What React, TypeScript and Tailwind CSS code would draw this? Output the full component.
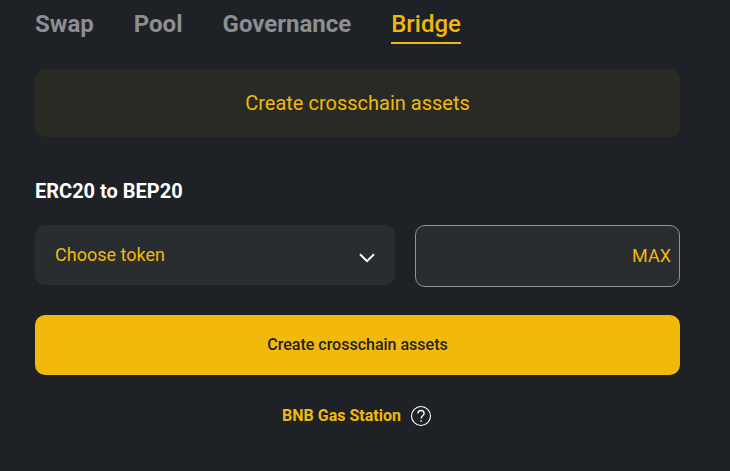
import { useState } from "react";

const TABS = [
  { label: "Swap", href: "#swap" },
  { label: "Pool", href: "#pool" },
  { label: "Governance", href: "#governance" },
  { label: "Bridge", href: "#bridge" },
];

function Tabs({ active }: { active: string }) {
  return (
    <nav className="flex gap-10 pt-1.5 text-2xl leading-9">
      {TABS.map((tab) => (
        <a
          key={tab.label}
          href={tab.href}
          aria-current={tab.label === active ? "page" : undefined}
          className={
            tab.label === active
              ? "border-b-2 border-[#f0b90b] font-medium text-[#f0b90b]"
              : "border-b-2 border-transparent font-bold text-[#8c8e91]"
          }
        >
          {tab.label}
        </a>
      ))}
    </nav>
  );
}

export default function App() {
  const [token, setToken] = useState("");
  const [amount, setAmount] = useState("");

  return (
    <div className="min-h-screen bg-[#1e2226] pr-[50px] pb-10 pl-[35px] font-[Roboto,sans-serif] text-white">
      <Tabs active="Bridge" />

      <main>
        <button
          type="button"
          className="mt-[25px] h-[68px] w-full rounded-[10px] bg-[#2a2a24] text-xl text-[#f0b90b]"
        >
          Create crosschain assets
        </button>

        <h1 className="mt-10 text-xl font-bold">ERC20 to BEP20</h1>

        <form onSubmit={(e) => e.preventDefault()}>
          <div className="mt-5 flex items-start gap-5">
            <div className="relative flex-1">
              <select
                aria-label="Choose token"
                value={token}
                onChange={(e) => setToken(e.target.value)}
                className="h-[60px] w-full appearance-none rounded-[10px] bg-[#2a2d30] px-5 text-lg text-[#f0b90b]"
              >
                <option value="">Choose token</option>
                <option value="eth">ETH</option>
                <option value="usdt">USDT</option>
              </select>
              <svg
                className="pointer-events-none absolute top-6 right-5 h-4 w-4"
                viewBox="0 0 16 16"
                fill="none"
                stroke="#fff"
                strokeWidth="2"
                aria-hidden="true"
              >
                <path d="M1 5.2l7 7 7-7" />
              </svg>
            </div>

            {/* Amount */}
            <div className="flex h-[62px] w-[265px] items-center rounded-[10px] border border-[#929497] bg-[#2a2d30] pr-2 pl-5">
              <input
                type="text"
                inputMode="decimal"
                aria-label="Amount"
                value={amount}
                onChange={(e) => setAmount(e.target.value)}
                className="min-w-0 flex-1 bg-transparent text-lg text-white outline-none"
              />
              <button type="button" className="text-lg text-[#f0b90b]">
                MAX
              </button>
            </div>
          </div>

          <button
            type="submit"
            className="mt-7 h-[60px] w-full rounded-[10px] bg-[#f0b90b] text-base font-medium text-[#1e2226]"
          >
            Create crosschain assets
          </button>
        </form>

        <div className="mt-[29px] flex items-center justify-center gap-2">
          <a href="#gas-station" className="text-base font-bold text-[#f0b90b]">
            BNB Gas Station
          </a>
          <button type="button" aria-label="About BNB Gas Station">
            <svg className="h-6 w-6" viewBox="0 0 24 24" fill="none" stroke="#fff" aria-hidden="true">
              <circle cx="12" cy="12" r="9.5" strokeWidth="1.1" />
              <path d="M8.9 9.6c0-2 1.3-3.1 3.1-3.1s3.1 1.1 3.1 2.9c0 2.2-3 2.6-3 5.2" strokeWidth="1.3" />
              <path d="M12.1 16.2v1.5" strokeWidth="1.4" />
            </svg>
          </button>
        </div>
      </main>
    </div>
  );
}
